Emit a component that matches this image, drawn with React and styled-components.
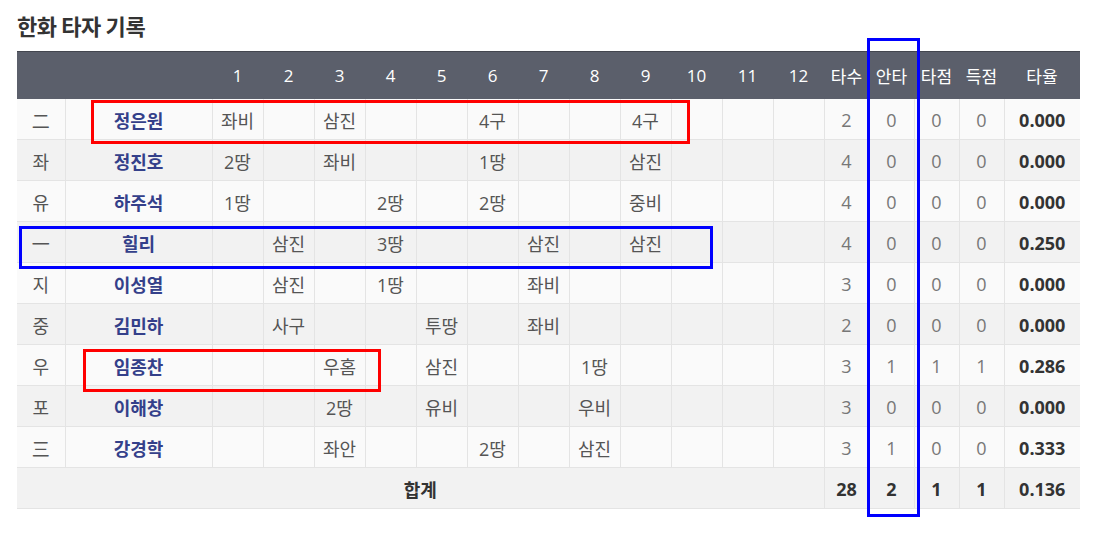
import React from "react";
import styled, { createGlobalStyle } from "styled-components";

const GlobalStyle = createGlobalStyle`
  body {
    margin: 0;
    background: #ffffff;
    font-family: "Open Sans", "Noto Sans CJK KR", sans-serif;
  }
`;

const INNINGS = [1, 2, 3, 4, 5, 6, 7, 8, 9, 10, 11, 12];

const batters = [
  { pos: "二", name: "정은원", plays: ["좌비", "", "삼진", "", "", "4구", "", "", "4구", "", "", ""], ab: 2, h: 0, rbi: 0, r: 0, avg: "0.000" },
  { pos: "좌", name: "정진호", plays: ["2땅", "", "좌비", "", "", "1땅", "", "", "삼진", "", "", ""], ab: 4, h: 0, rbi: 0, r: 0, avg: "0.000" },
  { pos: "유", name: "하주석", plays: ["1땅", "", "", "2땅", "", "2땅", "", "", "중비", "", "", ""], ab: 4, h: 0, rbi: 0, r: 0, avg: "0.000" },
  { pos: "一", name: "힐리", plays: ["", "삼진", "", "3땅", "", "", "삼진", "", "삼진", "", "", ""], ab: 4, h: 0, rbi: 0, r: 0, avg: "0.250" },
  { pos: "지", name: "이성열", plays: ["", "삼진", "", "1땅", "", "", "좌비", "", "", "", "", ""], ab: 3, h: 0, rbi: 0, r: 0, avg: "0.000" },
  { pos: "중", name: "김민하", plays: ["", "사구", "", "", "투땅", "", "좌비", "", "", "", "", ""], ab: 2, h: 0, rbi: 0, r: 0, avg: "0.000" },
  { pos: "우", name: "임종찬", plays: ["", "", "우홈", "", "삼진", "", "", "1땅", "", "", "", ""], ab: 3, h: 1, rbi: 1, r: 1, avg: "0.286" },
  { pos: "포", name: "이해창", plays: ["", "", "2땅", "", "유비", "", "", "우비", "", "", "", ""], ab: 3, h: 0, rbi: 0, r: 0, avg: "0.000" },
  { pos: "三", name: "강경학", plays: ["", "", "좌안", "", "", "2땅", "", "삼진", "", "", "", ""], ab: 3, h: 1, rbi: 0, r: 0, avg: "0.333" },
];

const App = () => {
  return (
    <Page>
      <GlobalStyle />
      <Title>한화 타자 기록</Title>
      <Table>
        <colgroup>
          <col style={{ width: 48 }} />
          <col style={{ width: 147 }} />
          {INNINGS.map((n) => (
            <col key={n} style={{ width: 51 }} />
          ))}
          <col style={{ width: 45 }} />
          <col style={{ width: 45 }} />
          <col style={{ width: 45 }} />
          <col style={{ width: 45 }} />
          <col style={{ width: 76 }} />
        </colgroup>
        <thead>
          <tr>
            <HeadCell />
            <HeadCell />
            {INNINGS.map((n) => (
              <HeadCell key={n}>{n}</HeadCell>
            ))}
            <HeadCell>타수</HeadCell>
            <HeadCell>안타</HeadCell>
            <HeadCell>타점</HeadCell>
            <HeadCell>득점</HeadCell>
            <HeadCell>타율</HeadCell>
          </tr>
        </thead>
        <tbody>
          {batters.map((b) => (
            <Row key={b.name}>
              <PosCell>{b.pos}</PosCell>
              <NameCell>{b.name}</NameCell>
              {b.plays.map((p, i) => (
                <PlayCell key={i}>{p}</PlayCell>
              ))}
              <StatCell>{b.ab}</StatCell>
              <StatCell>{b.h}</StatCell>
              <StatCell>{b.rbi}</StatCell>
              <StatCell>{b.r}</StatCell>
              <AvgCell>{b.avg}</AvgCell>
            </Row>
          ))}
          <Row>
            <TotalLabel colSpan={14}>합계</TotalLabel>
            <AvgCell>28</AvgCell>
            <AvgCell>2</AvgCell>
            <AvgCell>1</AvgCell>
            <AvgCell>1</AvgCell>
            <AvgCell>0.136</AvgCell>
          </Row>
        </tbody>
      </Table>

      <Mark $color="#ff0000" $left={91} $top={100} $width={599} $height={44} />
      <Mark $color="#0000ff" $left={19} $top={226} $width={694} $height={43} />
      <Mark $color="#ff0000" $left={83} $top={349} $width={298} $height={43} />
      <Mark $color="#0000ff" $left={867} $top={38} $width={53} $height={479} />
    </Page>
  );
};

const Page = styled.div`
  position: relative;
  width: 1107px;
  height: 546px;
  padding: 11px 0 0 17px;
  box-sizing: border-box;
`;

const Title = styled.h2`
  margin: 0 0 11px;
  font-family: "Noto Sans CJK KR", sans-serif;
  font-size: 22px;
  line-height: 29px;
  font-weight: 700;
  color: #333333;
  letter-spacing: -0.4px;
`;

const Table = styled.table`
  width: 1063px;
  table-layout: fixed;
  border-collapse: collapse;
  font-size: 18px;
`;

const HeadCell = styled.th`
  height: 47px;
  padding: 0;
  background: #5b5f6b;
  border-top: 1px solid #43464f;
  color: #ffffff;
  font-size: 17px;
  font-weight: 400;
  text-align: center;
`;

const Row = styled.tr`
  background: #fafafa;
  &:nth-child(even) {
    background: #f2f2f2;
  }
`;

const Cell = styled.td`
  height: 38px;
  padding: 2px 0 0;
  text-align: center;
  border-bottom: 1px solid #e4e4e4;
  border-right: 1px solid #e4e4e4;
  white-space: nowrap;
  &:last-child {
    border-right: none;
  }
`;

const PosCell = styled(Cell)`
  color: #555555;
`;

const NameCell = styled(Cell)`
  color: #34408a;
  font-weight: 700;
`;

const PlayCell = styled(Cell)`
  color: #555555;
`;

const StatCell = styled(Cell)`
  color: #777777;
`;

const AvgCell = styled(Cell)`
  color: #333333;
  font-weight: 700;
`;

const TotalLabel = styled(Cell)`
  color: #333333;
  font-weight: 700;
`;

const Mark = styled.div`
  position: absolute;
  left: ${(p) => p.$left}px;
  top: ${(p) => p.$top}px;
  width: ${(p) => p.$width}px;
  height: ${(p) => p.$height}px;
  border: 3px solid ${(p) => p.$color};
  box-sizing: border-box;
  pointer-events: none;
`;

export default App;
